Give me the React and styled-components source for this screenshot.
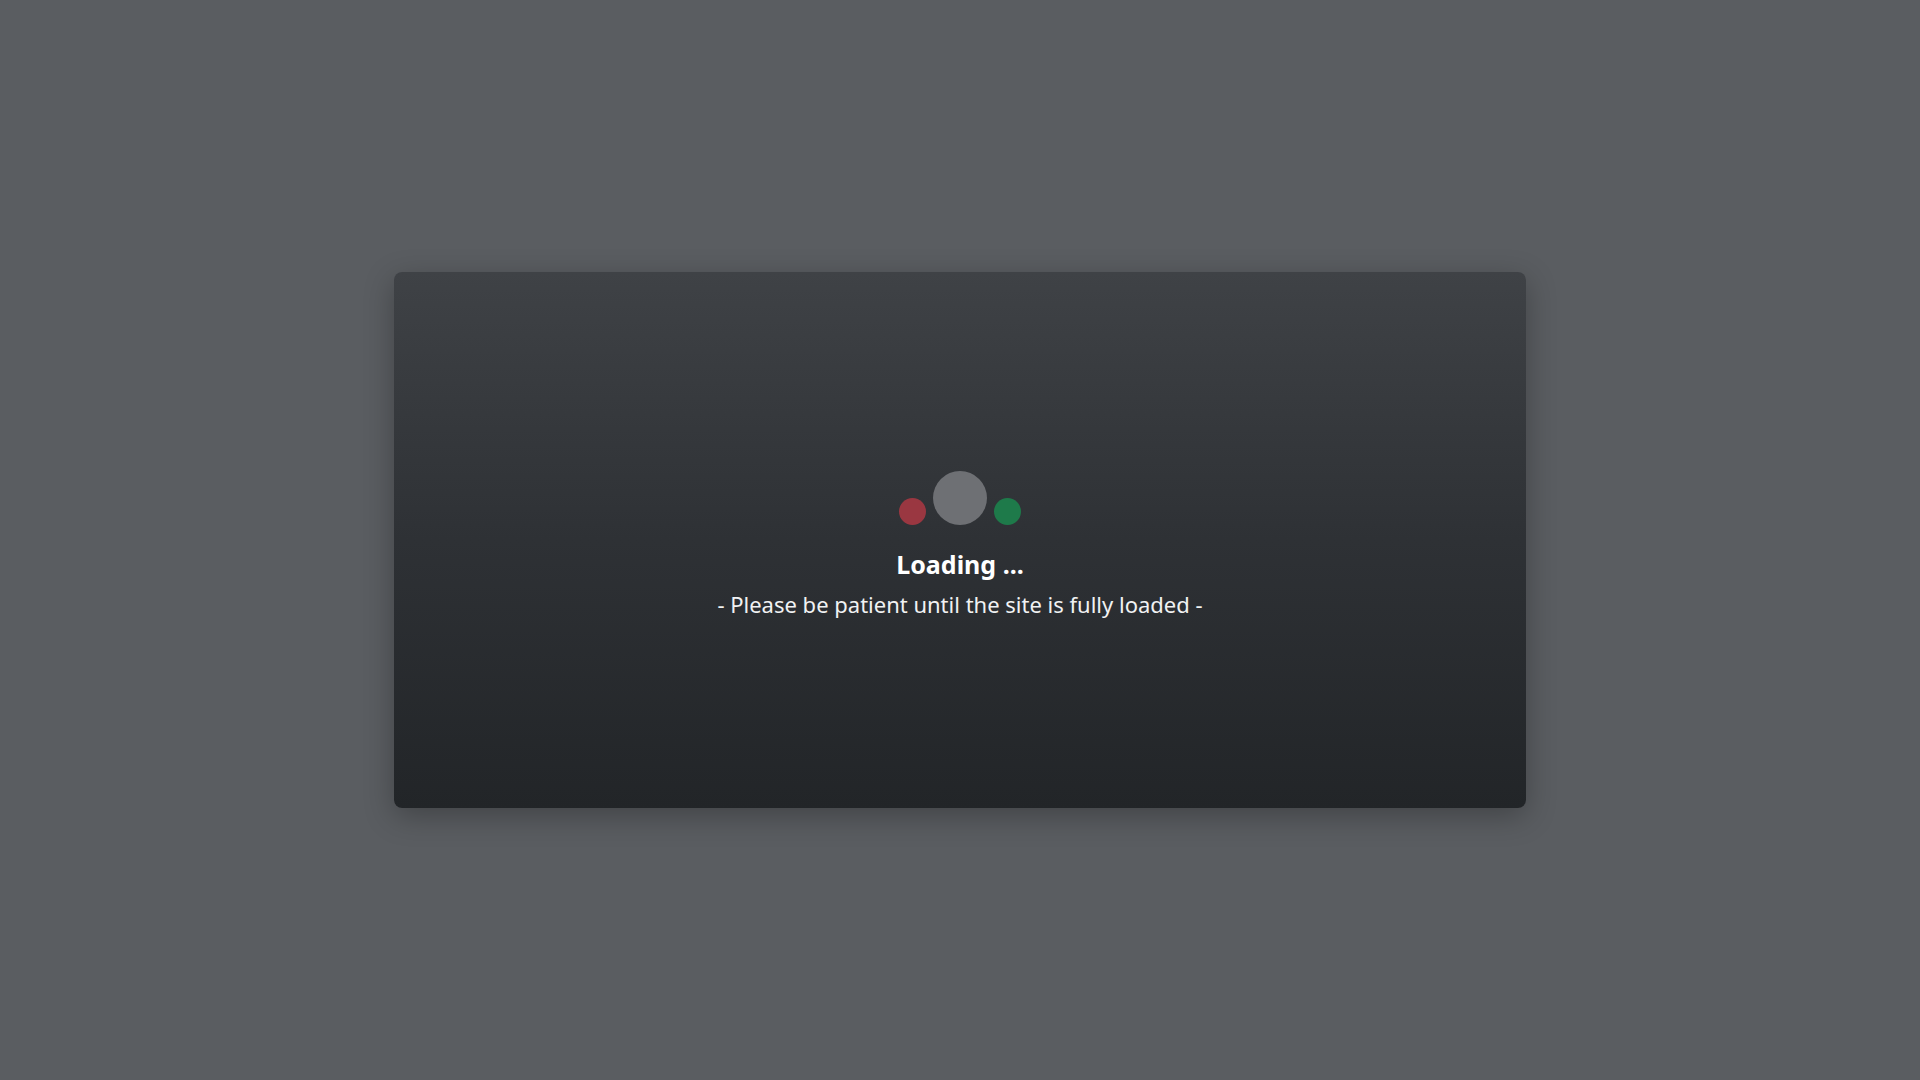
import React from 'react'
import styled, {createGlobalStyle} from 'styled-components'

const GlobalStyle = createGlobalStyle`
  html, body {
    margin: 0;
    padding: 0;
    height: 100%;
  }
  body {
    background: #5a5d61;
    font-family: "Noto Sans", "Open Sans", sans-serif;
  }
  #root {
    height: 100%;
  }
`

const Screen = styled.div`
  height: 100vh;
  display: flex;
  justify-content: center;
  align-items: center;
`

const Card = styled.div`
  width: 1132px;
  height: 536px;
  border-radius: 8px;
  background: linear-gradient(to bottom, #3f4246 0%, #2e3135 50%, #222528 100%);
  box-shadow: 0 8px 30px rgba(0, 0, 0, 0.28);
  display: flex;
  flex-direction: column;
  justify-content: center;
  align-items: center;
  padding-top: 10px;
  box-sizing: border-box;
`

const Dots = styled.div`
  display: flex;
  align-items: flex-end;
  gap: 7px;
  margin-bottom: 23px;
`

const Dot = styled.span`
  display: block;
  width: ${p => p.size}px;
  height: ${p => p.size}px;
  border-radius: 50%;
  background: ${p => p.color};
  filter: blur(0.6px);
`

const Title = styled.h1`
  margin: 0;
  color: #ffffff;
  font-size: 25px;
  font-weight: 700;
  line-height: 32px;
`

const Subtitle = styled.p`
  margin: 9px 0 0;
  color: #f1f2f3;
  font-size: 22px;
  font-weight: 400;
  line-height: 30px;
`

export default function App() {
  return (
    <>
      <GlobalStyle />
      <Screen>
        <Card>
          <Dots>
            <Dot size={27} color="#9a3741" />
            <Dot size={54} color="#6e7074" />
            <Dot size={27} color="#1e7a4a" />
          </Dots>
          <Title>Loading ...</Title>
          <Subtitle>- Please be patient until the site is fully loaded -</Subtitle>
        </Card>
      </Screen>
    </>
  )
}
